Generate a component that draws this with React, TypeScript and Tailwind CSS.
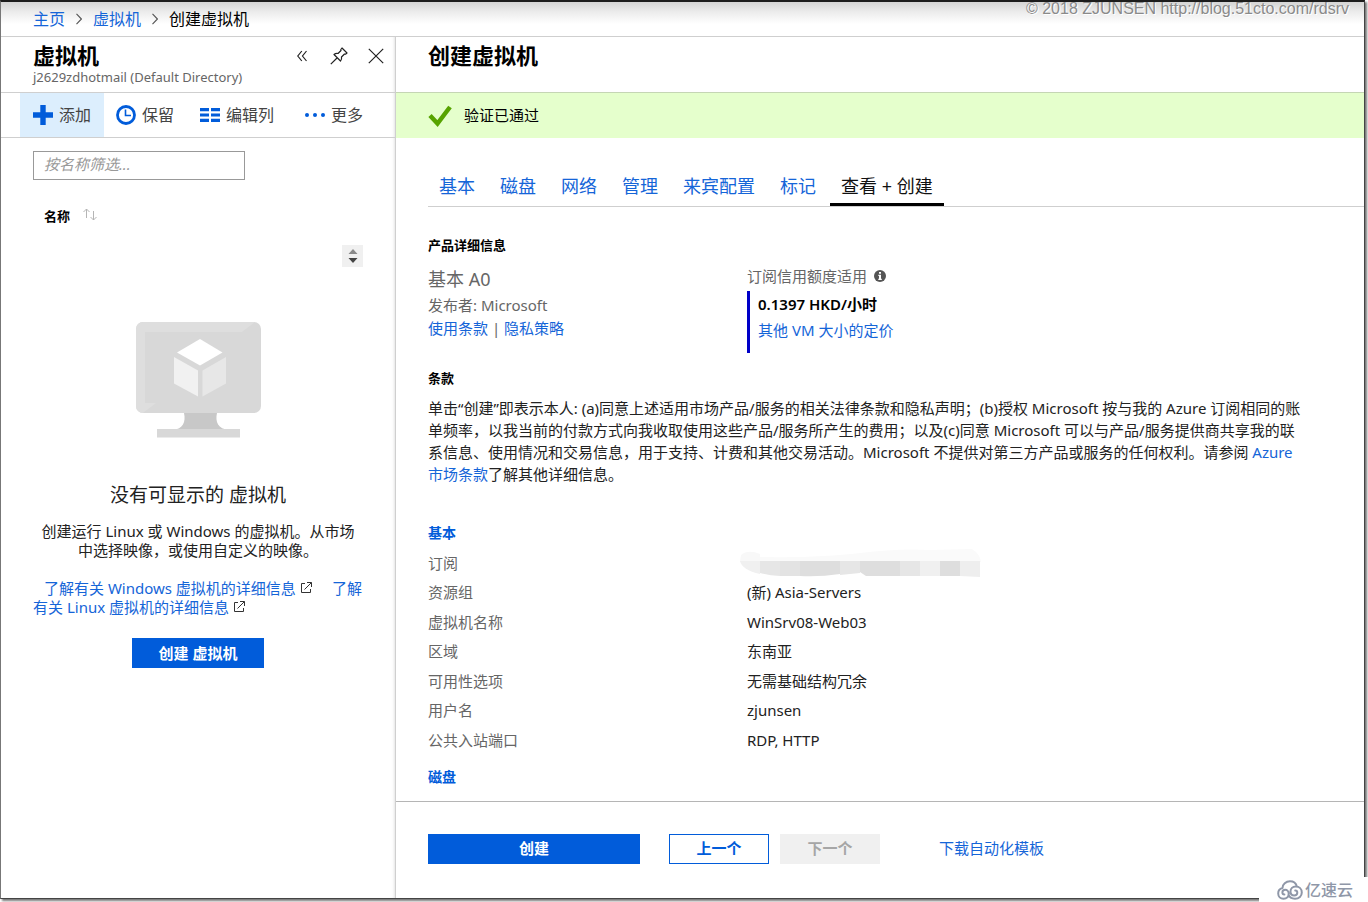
import React from "react";

const link = "text-[#1565d8] hover:underline";

function ExternalIcon() {
  return (
    <svg viewBox="0 0 12 12" className="mx-1 inline-block h-3 w-3 align-baseline" fill="none" stroke="#333" aria-hidden="true">
      <path d="M5 1.5H1.5v9h9V7M7 .5h4.5V5M11.3.7L4.5 7.5" />
    </svg>
  );
}

function Breadcrumb() {
  const sep = (
    <svg viewBox="0 0 6 12" className="h-3 w-[6px]" fill="none" stroke="#555" strokeWidth="1.1" aria-hidden="true">
      <path d="M.5 .8L5.4 6 .5 11.2" />
    </svg>
  );
  return (
    <nav className="flex h-[35px] items-center gap-[11px] border-b border-[#cfcfcf] bg-[linear-gradient(to_bottom,#d4d4d4_0px,#ececec_10px,#ffffff_22px)] pl-8 text-base">
      <a href="#home" className={link}>主页</a>
      {sep}
      <a href="#vms" className={link}>虚拟机</a>
      {sep}
      <span>创建虚拟机</span>
    </nav>
  );
}

function EmptyState() {
  return (
    <div className="flex flex-col items-center px-8 pt-[55px] text-center">
      <svg viewBox="0 0 125 116" className="h-[116px] w-[125px]" aria-hidden="true">
        <path d="M48 91h33c-2 9 1 16 12 17H37c10-1 13-8 11-17z" fill="#c8c8c8" />
        <rect x="21" y="107" width="83" height="8.500" fill="#d8d8d8" />
        <rect width="125" height="91" rx="7" fill="#d8d8d8" />
        <path d="M7 0h112l-13 10H9v71h11L7 91a7 7 0 0 1-7-7V7a7 7 0 0 1 7-7z" fill="#dedede" />
        <path d="M64 17l22.500 13.500L64 43.500 41 30.500z" fill="#fff" />
        <path d="M38 35l24 13.500v26L38 61.500z" fill="#f1f1f1" />
        <path d="M90 35L66.500 48.500v26L90 61.500z" fill="#e7e7e7" />
      </svg>
      <h2 className="mt-[44px] text-[19px] leading-[26px] text-[#222]">没有可显示的 虚拟机</h2>
      <p className="mt-[14px] px-1 text-[15px] leading-[19px] text-[#222]">
        创建运行 Linux 或 Windows 的虚拟机。从市场中选择映像，或使用自定义的映像。
      </p>
      <p className="mt-[19px] w-full text-left indent-[11px] text-[15px] leading-[19px]">
        <a href="#windows" className={link}>了解有关 Windows 虚拟机的详细信息</a>
        <ExternalIcon />
        <span className="inline-block w-4" />
        <a href="#linux" className={link}>了解有关 Linux 虚拟机的详细信息</a>
        <ExternalIcon />
      </p>
      <button className="mt-[21px] h-[30px] w-[132px] bg-[#015cda] text-[15px] font-semibold text-white">创建 虚拟机</button>
    </div>
  );
}

function Sidebar() {
  return (
    <aside className="flex w-[395px] shrink-0 flex-col border-r border-[#cfcfcf] shadow-[inset_-3px_0_3px_-2px_#e4e4e4]">
      <header className="flex h-14 justify-between border-b border-[#cfcfcf] pl-8 pr-[11px]">
        <div>
          <h1 className="mt-[5px] text-[22px] font-bold leading-[26px]">虚拟机</h1>
          <p className="mt-px text-[13px] leading-[17px] text-[#666]">j2629zdhotmail (Default Directory)</p>
        </div>
        <div className="mt-[10px] flex h-[18px] items-center">
          <button aria-label="折叠" className="mr-[23px]">
            <svg viewBox="0 0 10 12" className="h-3 w-[10px]" fill="none" stroke="#222" strokeWidth="1.200">
              <path d="M4.800 1L.8 6l4 5M9.500 1l-4 5 4 5" />
            </svg>
          </button>
          <button aria-label="固定" className="mr-5">
            <svg viewBox="0 0 18 18" className="h-[18px] w-[18px]" fill="none" stroke="#222" strokeWidth="1.200" strokeLinejoin="round">
              <path d="M12 1l5 5-1.500 1.200-1-.2-3 3c.4 1.800 0 3-1 4L4 7.500c1.200-1 2.500-1.300 4-1l3-3-.2-1zM7 11L.8 17.200" />
            </svg>
          </button>
          <button aria-label="关闭">
            <svg viewBox="0 0 16 16" className="h-4 w-4" fill="none" stroke="#222" strokeWidth="1.200">
              <path d="M.8.8l14.400 14.400M15.200.8L.8 15.200" />
            </svg>
          </button>
        </div>
      </header>
      <div className="flex h-[45px] border-b border-[#cfcfcf] pl-[19px] text-base text-[#444]">
        <button className="flex w-[84px] items-center gap-[6px] bg-[#dceefd] pl-[13px]">
          <svg viewBox="0 0 20 20" className="h-5 w-5" fill="#015cda"><path d="M7.300 0h5.400v7.300H20v5.400h-7.300V20H7.300v-7.300H0V7.300h7.300z" /></svg>
          添加
        </button>
        <button className="flex w-[84px] items-center gap-[6px] pl-3">
          <svg viewBox="0 0 20 20" className="h-5 w-5" fill="none" stroke="#015cda">
            <circle cx="10" cy="10" r="8.500" strokeWidth="2.800" />
            <path d="M9.500 4.500v6H15" strokeWidth="1.600" />
          </svg>
          保留
        </button>
        <button className="flex w-[105px] items-center gap-[6px] pl-3">
          <svg viewBox="0 0 20 14" className="h-[14px] w-5" fill="#015cda">
            <path d="M0 0h9v3.200H0zM11 0h9v3.200h-9zM0 5.400h9v3.200H0zM11 5.400h9v3.200h-9zM0 10.800h9v3.200H0zM11 10.800h9v3.200h-9z" />
          </svg>
          编辑列
        </button>
        <button className="flex items-center gap-[6px] pl-3">
          <svg viewBox="0 0 20 4" className="h-1 w-5" fill="#015cda">
            <circle cx="2" cy="2" r="2" /><circle cx="10" cy="2" r="2" /><circle cx="18" cy="2" r="2" />
          </svg>
          更多
        </button>
      </div>
      <div className="px-8 pt-[13px]">
        <input
          aria-label="按名称筛选"
          placeholder="按名称筛选..."
          className="block h-[29px] w-[212px] border border-[#999] px-[10px] pb-1 text-[15px] italic outline-none placeholder:text-[#999]"
        />
        <button className="ml-[11px] mt-[27px] flex h-5 items-center gap-3 text-[13px] font-bold">
          名称
          <svg viewBox="0 0 16 14" className="mb-1 h-[14px] w-4" fill="none" stroke="#b5b5b5">
            <path d="M4.500 10V1M1.500 4l3-3 3 3M11.500 3v9M8.500 9l3 3 3-3" />
          </svg>
        </button>
        <button aria-label="滚动" className="ml-auto mt-[18px] flex h-[22px] w-[21px] items-center justify-center bg-[#f0f0f0]">
          <svg viewBox="0 0 10 14" className="h-[14px] w-[10px]">
            <path d="M5 0l4.500 5h-9z" fill="#8a8a8a" /><path d="M5 14L.5 9h9z" fill="#444" />
          </svg>
        </button>
      </div>
      <EmptyState />
    </aside>
  );
}

const tabs = ["基本", "磁盘", "网络", "管理", "来宾配置", "标记", "查看 + 创建"];

function Tabs() {
  return (
    <div role="tablist" className="mt-[29px] flex gap-[3px] border-b border-[#cfcfcf] text-[18px]">
      {tabs.map((t, i) => (
        <button
          key={t}
          role="tab"
          aria-selected={i === 6}
          className={
            i === 6
              ? "h-[39px] border-b-[3px] border-black px-[11px] pt-[3px] text-[#111]"
              : "h-[39px] border-b-[3px] border-transparent px-[11px] pt-[3px] text-[#1565d8]"
          }
        >
          {t}
        </button>
      ))}
    </div>
  );
}

function Redacted() {
  return (
    <svg viewBox="0 0 241 30" className="-ml-[7px] block h-[30px] w-[241px]" aria-hidden="true">
      <path d="M1 7Q8 1 20 6v8H0z" fill="#f8f8f8" />
      <path d="M20 14V9Q80 10 120 5T190 2L232 1q8 5 9 13z" fill="#fafafa" />
      <path d="M0 13h20v13Q2 22 0 13z" fill="#f0f0f0" />
      <path d="M20 13h20v15q-10 0-20-3z" fill="#e6e6e6" />
      <path d="M40 13h20v15H40z" fill="#e3e3e3" />
      <path d="M60 13h40v13q-20 3-40 2z" fill="#dedede" />
      <path d="M100 13h20v12l-20 2z" fill="#e6e6e6" />
      <path d="M120 13h40v15h-34l-6-4z" fill="#dedede" />
      <path d="M160 13h20v15h-20z" fill="#e6e6e6" />
      <path d="M180 13h20v15h-20z" fill="#f0f0f0" />
      <path d="M200 13h20v15h-20z" fill="#dedede" />
      <path d="M220 13h20v16l-20-1z" fill="#eeeeee" />
    </svg>
  );
}

const rows: [string, React.ReactNode][] = [
  ["订阅", <Redacted />],
  ["资源组", "(新) Asia-Servers"],
  ["虚拟机名称", "WinSrv08-Web03"],
  ["区域", "东南亚"],
  ["可用性选项", "无需基础结构冗余"],
  ["用户名", "zjunsen"],
  ["公共入站端口", "RDP, HTTP"],
];

function Main() {
  return (
    <main className="flex min-w-0 flex-1 flex-col">
      <header className="h-14 border-b border-[#c5d6b4] pl-8">
        <h1 className="mt-[5px] text-[22px] font-bold leading-[26px]">创建虚拟机</h1>
      </header>
      <div role="status" className="flex h-[45px] items-center gap-3 bg-[#e5ffcc] pl-8 text-[15px]">
        <svg viewBox="0 0 24 22" className="h-[22px] w-6" fill="none" stroke="#57a300" strokeWidth="4.500" aria-hidden="true">
          <path d="M2 10.500l7.500 8L22 2" />
        </svg>
        验证已通过
      </div>
      <div className="flex-1 pl-8">
        <Tabs />
        <h3 className="mt-[29px] text-[13px] font-bold leading-[18px]">产品详细信息</h3>
        <div className="flex text-[15px] text-[#666]">
          <div className="w-[319px] shrink-0">
            <p className="mt-[13px] text-[18px] leading-6">基本 A0</p>
            <p className="mt-[3px] leading-[22px]">发布者: Microsoft</p>
            <p className="mt-px leading-[22px]">
              <a href="#terms" className={link}>使用条款</a> | <a href="#privacy" className={link}>隐私策略</a>
            </p>
          </div>
          <div>
            <p className="mt-[11px] flex items-center gap-[7px] leading-[22px]">
              订阅信用额度适用
              <svg viewBox="0 0 12 12" className="h-3 w-3" aria-hidden="true">
                <circle cx="6" cy="6" r="6" fill="#555" />
                <path d="M5 2h2v1.700H5zM4.300 4.800H7v4h.8V10H4.300V8.800H5V6h-.7z" fill="#fff" />
              </svg>
            </p>
            <div className="mt-1 h-[62px] border-l-[3px] border-[#0000c8] pl-2">
              <p className="pt-[2px] font-semibold leading-[22px] text-black">0.1397 HKD/小时</p>
              <p className="mt-1 leading-[22px]"><a href="#pricing" className={link}>其他 VM 大小的定价</a></p>
            </div>
          </div>
        </div>
        <h3 className="mt-4 text-[13px] font-bold leading-[18px]">条款</h3>
        <p className="mt-[10px] pr-[60px] text-[15px] leading-[22px] text-[#222]">
          单击“创建”即表示本人: (a)同意上述适用市场产品/服务的相关法律条款和隐私声明；(b)授权 Microsoft 按与我的 Azure 订阅相同的账单频率，以我当前的付款方式向我收取使用这些产品/服务所产生的费用；以及(c)同意 Microsoft 可以与产品/服务提供商共享我的联系信息、使用情况和交易信息，用于支持、计费和其他交易活动。Microsoft 不提供对第三方产品或服务的任何权利。请参阅 <a href="#market" className={link}>Azure 市场条款</a>了解其他详细信息。
        </p>
        <h3 className="mt-[38px] text-[14px] font-bold leading-5 text-[#015cda]">基本</h3>
        <dl className="mt-[5px] grid h-[207px] grid-rows-7 text-[15px]">
          {rows.map(([k, v]) => (
            <div key={k} className="flex min-h-0 items-center">
              <dt className="w-[319px] shrink-0 text-[#666]">{k}</dt>
              <dd className="text-[#222]">{v}</dd>
            </div>
          ))}
        </dl>
        <h3 className="mt-3 text-[14px] font-bold leading-5 text-[#015cda]">磁盘</h3>
      </div>
      <footer className="flex h-[97px] items-center border-t border-[#b5b5b5] pb-[2px] pl-8 text-[15px]">
        <button className="h-[30px] w-[212px] bg-[#015cda] pb-[2px] font-bold text-white">创建</button>
        <button className="ml-[29px] h-[30px] w-[100px] border border-[#015cda] pb-[2px] font-semibold text-[#015cda]">上一个</button>
        <button disabled className="ml-[11px] h-[30px] w-[100px] bg-[#f0f0f0] pb-[2px] font-semibold text-[#a6a6a6]">下一个</button>
        <a href="#template" className="ml-[59px] pb-[2px] text-[#1565d8] hover:underline">下载自动化模板</a>
      </footer>
    </main>
  );
}

export default function App() {
  return (
    <div className="relative flex min-h-screen flex-col bg-white pb-[3px] pr-[3px] font-['Noto_Sans','Noto_Sans_CJK_SC',sans-serif] text-black">
      <div className="flex flex-1 flex-col border-b border-l border-r border-t-2 border-b-[#444] border-l-[#777] border-r-[#444] border-t-[#1c1c1c] shadow-[2px_2px_2px_#777]">
        <Breadcrumb />
        <div className="flex flex-1">
          <Sidebar />
          <Main />
        </div>
      </div>
      <p className="absolute right-[19px] top-0 font-['Liberation_Sans',sans-serif] text-base leading-[18px] text-[#8a8a8a] [text-shadow:1px_1px_0_#fff]">
        © 2018 ZJUNSEN http://blog.51cto.com/rdsrv
      </p>
      <div className="absolute bottom-0 right-0 flex h-[25px] w-[109px] items-center gap-[2px] bg-white pl-[18px] text-[16px] font-medium leading-none text-[#8f97a8]">
        <svg viewBox="0 0 26 20" className="h-5 w-[26px]" fill="none" stroke="#8f97a8" strokeWidth="2" strokeLinecap="round" aria-hidden="true">
          <path d="M5.500 8C5.500 4 9 1.300 13 1.300c3.500 0 6 2 6.800 5M5.500 8C2.800 8.700 1.200 10.900 1.200 13.400c0 3 2.300 5.300 5.300 5.300 3.300 0 5.200-2.300 5.200-5 0-2.300-1.600-3.900-3.500-3.900-1.700 0-2.800 1.200-2.800 2.600 0 1.300.9 2 2 2M11.500 14.500c.8 2.700 3 4.200 6.500 4.200 4 0 6.800-2.700 6.800-6.200s-2.600-6-6-6c-3.300 0-5.300 2.300-5.300 4.900 0 2.400 1.600 4 3.700 4 1.900 0 3.100-1.200 3.100-2.700 0-1.300-.9-2.100-2.100-2.100" />
        </svg>
        亿速云
      </div>
    </div>
  );
}
